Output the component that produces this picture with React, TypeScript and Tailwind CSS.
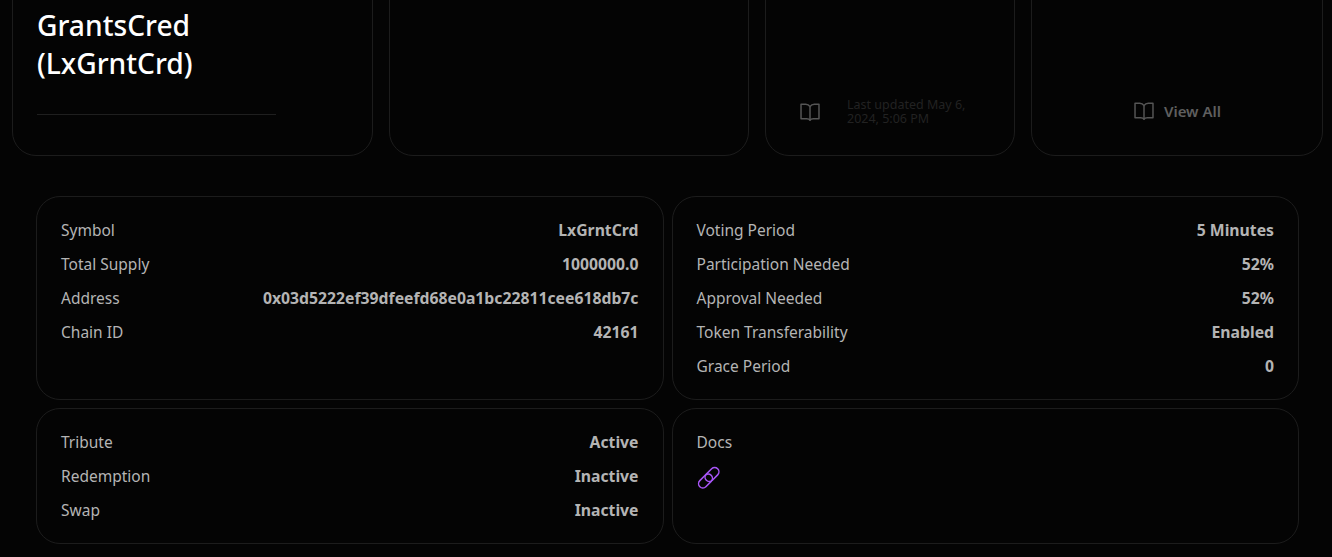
const token: [string, string][] = [
  ['Symbol', 'LxGrntCrd'],
  ['Total Supply', '1000000.0'],
  ['Address', '0x03d5222ef39dfeefd68e0a1bc22811cee618db7c'],
  ['Chain ID', '42161'],
];

const governance: [string, string][] = [
  ['Voting Period', '5 Minutes'],
  ['Participation Needed', '52%'],
  ['Approval Needed', '52%'],
  ['Token Transferability', 'Enabled'],
  ['Grace Period', '0'],
];

const extensions: [string, string][] = [
  ['Tribute', 'Active'],
  ['Redemption', 'Inactive'],
  ['Swap', 'Inactive'],
];

function BookIcon({ className }: { className: string }) {
  return (
    <svg viewBox="0 0 24 24" fill="none" stroke="currentColor" strokeWidth="1.6" strokeLinejoin="round" className={className}>
      <path d="M12 6.2C11 4.6 9.3 3.6 7.4 3.6H2.2v15.8h6.2c1.6 0 3 .4 3.6 1.7.6-1.3 2-1.7 3.6-1.7h6.2V3.6h-5.2c-1.9 0-3.6 1-4.6 2.6z" />
      <path d="M12 6.2v14.9" />
    </svg>
  );
}

function LinkIcon({ className }: { className: string }) {
  return (
    <svg viewBox="0 0 24 24" fill="none" stroke="currentColor" strokeWidth="1.5" className={className}>
      <rect x="7" y="4.25" width="16" height="8.5" rx="4.25" transform="rotate(-45 15 8.5)" />
      <rect x="0.5" y="10.75" width="16" height="8.5" rx="4.25" transform="rotate(-45 8.5 15)" />
    </svg>
  );
}

function Rows({ rows }: { rows: [string, string][] }) {
  return (
    <div className="flex flex-col gap-[10px]">
      {rows.map(([label, value]) => (
        <div key={label} className="flex h-6 items-center justify-between leading-6">
          <span className="text-[15.5px] text-[#b4b4b4]">{label}</span>
          <span className="text-[15.75px] font-bold text-[#b4b4b4]">{value}</span>
        </div>
      ))}
    </div>
  );
}

export default function App() {
  return (
    <div className="h-[557px] w-[1332px] overflow-hidden bg-[#040404] font-['Noto_Sans','Open_Sans',sans-serif]">
      {/* Top cards, scrolled partly out of view */}
      <div className="mt-[-44px] ml-3 flex h-[200px] w-[1311px] gap-4">
        <div className="flex w-[361px] flex-col rounded-3xl border border-[#1c1c1c] pt-[49px] pl-6">
          <h1 className="w-[240px] text-[28.2px] leading-[38px] font-medium text-white">
            GrantsCred (LxGrntCrd)
          </h1>
          <div className="mt-[32px] h-px w-[239px] bg-[#1f1f1f]" />
        </div>
        <div className="w-[360px] rounded-3xl border border-[#1c1c1c]" />
        <div className="flex w-[250px] items-end rounded-3xl border border-[#1c1c1c] pb-[29px] pl-[33px]">
          <BookIcon className="mb-[3px] size-[22px] text-[#555555]" />
          <p className="ml-[26px] w-[130px] text-[12.5px] leading-[14px] text-[#222222]">
            Last updated May 6, 2024, 5:06 PM
          </p>
        </div>
        <div className="flex w-[292px] items-end justify-center rounded-3xl border border-[#1c1c1c] pb-[33px]">
          <BookIcon className="size-[22px] text-[#555555]" />
          <span className="ml-[9px] text-[15px] font-semibold text-[#5f5f5f]">View All</span>
        </div>
      </div>

      {/* Detail cards */}
      <div className="mt-10 ml-9 grid w-[1263px] grid-cols-2 grid-rows-[204px_136px] gap-2">
        <div className="rounded-3xl border border-[#1c1c1c] px-6 pt-[21px]">
          <Rows rows={token} />
        </div>
        <div className="rounded-3xl border border-[#1c1c1c] px-6 pt-[21px]">
          <Rows rows={governance} />
        </div>
        <div className="rounded-3xl border border-[#1c1c1c] px-6 pt-[21px]">
          <Rows rows={extensions} />
        </div>
        <div className="rounded-3xl border border-[#1c1c1c] px-6 pt-[21px]">
          <div className="text-[15.5px] leading-6 text-[#b4b4b4]">Docs</div>
          <LinkIcon className="mt-[12px] size-6 text-[#a855f7]" />
        </div>
      </div>
    </div>
  );
}
